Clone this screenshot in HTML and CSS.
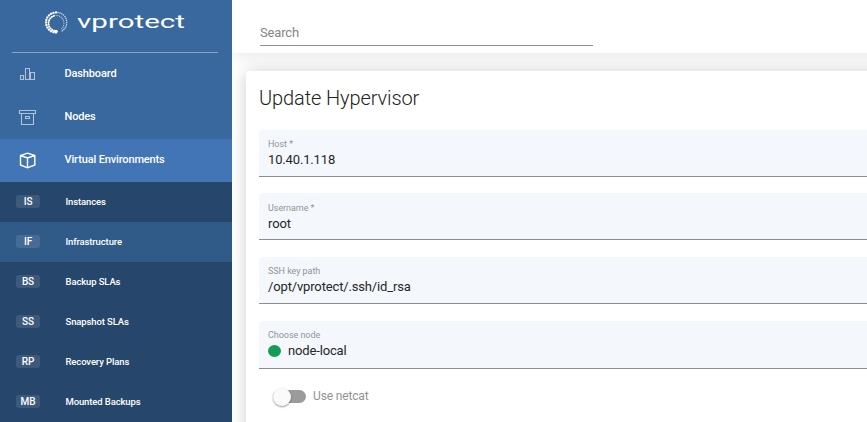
FILE: index.html
```
<!DOCTYPE html>
<html lang="en">
<head>
<meta charset="utf-8">
<title>vProtect</title>
<link rel="stylesheet" href="styles.css">
</head>
<body>
<div class="app">
  <aside class="sidebar">
    <div class="brand">
      <svg class="brand-mark" width="24" height="24" viewBox="0 0 24 24" fill="none" stroke="#fff" stroke-linecap="round">
        <path d="M12 21.500A10 10 0 0 1 12 1.500" stroke-width="2.300" stroke-dasharray="0.100 2.500"/>
        <path d="M12 1.500A10 10 0 0 1 18 20" stroke-width="1.400" stroke-dasharray="0.100 1.900" opacity=".8"/>
        <path d="M12.500 20A7.500 7.500 0 0 1 12 4.500" stroke-width="2" stroke-dasharray="0.100 2.100"/>
        <path d="M12 4.500A7.800 7.800 0 0 1 17.500 18" stroke-width="1.200" stroke-dasharray="0.100 1.700" opacity=".65"/>
        <circle cx="12" cy="20.500" r="1.700" fill="#fff" stroke="none"/>
      </svg>
      <svg class="brand-name" width="110" height="26" viewBox="0 0 110 26">
        <text x="0" y="17" textLength="108" lengthAdjust="spacingAndGlyphs">vprotect</text>
      </svg>
    </div>
    <nav>
      <a class="item"><svg class="icon dim" viewBox="0 0 16 16"><path d="M.5 8.500h3v4h-3zM5.500 1.500h4v11h-4zM10.500 5.500h4v7h-4z"/></svg><span>Dashboard</span></a>
      <a class="item"><svg class="icon dim" viewBox="0 0 16 16"><path d="M-.5 .5h16v3h-16zM1.500 3.500v11h12V3.500M5.500 6.500h4v2h-4z"/></svg><span>Nodes</span></a>
      <a class="item active"><svg class="icon bold" viewBox="0 0 16 16"><path d="M7.500 .2 14.800 2.500v9.500L7.500 14.800.5 12V2.500zM.5 2.500l7 2.500L14.800 2.500M7.500 5v9.800"/></svg><span>Virtual Environments</span></a>
      <div class="submenu">
        <a class="sub"><b>IS</b><span>Instances</span></a>
        <a class="sub current"><b>IF</b><span>Infrastructure</span></a>
        <a class="sub"><b>BS</b><span>Backup SLAs</span></a>
        <a class="sub"><b>SS</b><span>Snapshot SLAs</span></a>
        <a class="sub"><b>RP</b><span>Recovery Plans</span></a>
        <a class="sub"><b>MB</b><span>Mounted Backups</span></a>
      </div>
    </nav>
  </aside>
  <main>
    <header class="topbar"><div class="search">Search</div></header>
    <section class="card">
      <h1>Update Hypervisor</h1>
      <div class="field"><label>Host *</label><div class="value">10.40.1.118</div></div>
      <div class="field user"><label>Username *</label><div class="value">root</div></div>
      <div class="field"><label>SSH key path</label><div class="value">/opt/vprotect/.ssh/id_rsa</div></div>
      <div class="field select"><label>Choose node</label><div class="value"><i class="status"></i>node-local</div></div>
      <div class="toggle"><span class="track"><span class="thumb"></span></span><span>Use netcat</span></div>
    </section>
  </main>
</div>
</body>
</html>
```
FILE: styles.css
```
* { box-sizing: border-box; }
body { margin: 0; font-family: Roboto, "Liberation Sans", sans-serif; overflow: hidden; }
.app { display: flex; width: 867px; height: 422px; overflow: hidden; }
.sidebar { width: 232px; flex: none; background: #39689e; color: #fff; }
.brand { height: 53px; margin: 0 14px 0 12px; padding: 11px 0 0 32px; border-bottom: 1px solid #91a5bd; display: flex; align-items: flex-start; }
.brand-name { margin-left: 9px; fill: #fff; font-size: 19px; overflow: visible; }
.item { height: 43px; display: flex; align-items: center; padding: 0 0 2px 20px; font-size: 11px; font-weight: 500; letter-spacing: -.14px; }
.item span { margin-left: 28.5px; }
.item.active { background: #4275b6; }
.icon { width: 16px; height: 16px; overflow: visible; fill: none; stroke: #fff; stroke-width: 1.1; position: relative; top: 1px; }
.icon.dim { opacity: .6; }
.icon.bold { stroke-width: 1.4; }
.submenu { background: #26466c; }
.sub { height: 40px; display: flex; align-items: center; padding: 0 0 1px 16px; font-size: 9.5px; font-weight: 500; letter-spacing: -.12px; }
.sub b { width: 24px; height: 13px; line-height: 13px; border-radius: 3px; background: rgba(255,255,255,.11); text-align: center; font-size: 10px; font-weight: 500; margin-right: 25.5px; }
.sub.current { background: #305a88; }
main { flex: 1; min-width: 0; background: #fff; overflow: hidden; }
.topbar { width: 714px; height: 53px; padding: 22px 0 0 28px; background: #fff; box-shadow: 0 1px 18px rgba(0,0,0,.12); }
.search { width: 333px; height: 24px; border-bottom: 1px solid #909090; font-size: 13px; line-height: 22px; color: #858585; letter-spacing: -.15px; }
.card { margin: 18px 0 0 14px; width: 700px; height: 420px; padding: 14px 13px; background: #fff; border-radius: 3px; box-shadow: 0 1px 18px rgba(0,0,0,.2); }
h1 { margin: 0 0 18px; font-size: 20px; line-height: 27px; font-weight: 300; color: #222; letter-spacing: -.1px; }
.field { height: 47px; margin-bottom: 17px; padding: 8px 9px 0; background: #f4f8fc; border-bottom: 1px solid #8b8d8f; border-radius: 4px 4px 0 0; }
.field:nth-of-type(1) { margin-bottom: 16px; }
.field.user { padding-top: 9px; }
.field.select { height: 48px; }
label { display: block; font-size: 9px; line-height: 12px; color: #929496; letter-spacing: -.05px; }
.value { font-size: 13px; line-height: 18px; margin-top: 1px; color: #262626; display: flex; align-items: center; letter-spacing: -.15px; }
.status { width: 13px; height: 12px; border-radius: 50%; background: #149b55; margin-right: 7px; }
.toggle { display: flex; align-items: center; height: 20px; margin: 0 0 0 14px; font-size: 12px; color: #929292; letter-spacing: -.15px; }
.track { width: 33px; height: 13px; border-radius: 7px; background: #9b9b9b; margin-right: 7px; position: relative; }
.thumb { position: absolute; left: 0; top: -2px; width: 18px; height: 18px; border-radius: 50%; background: #fafafa; box-shadow: 0 1px 2px rgba(0,0,0,.4); }
```
